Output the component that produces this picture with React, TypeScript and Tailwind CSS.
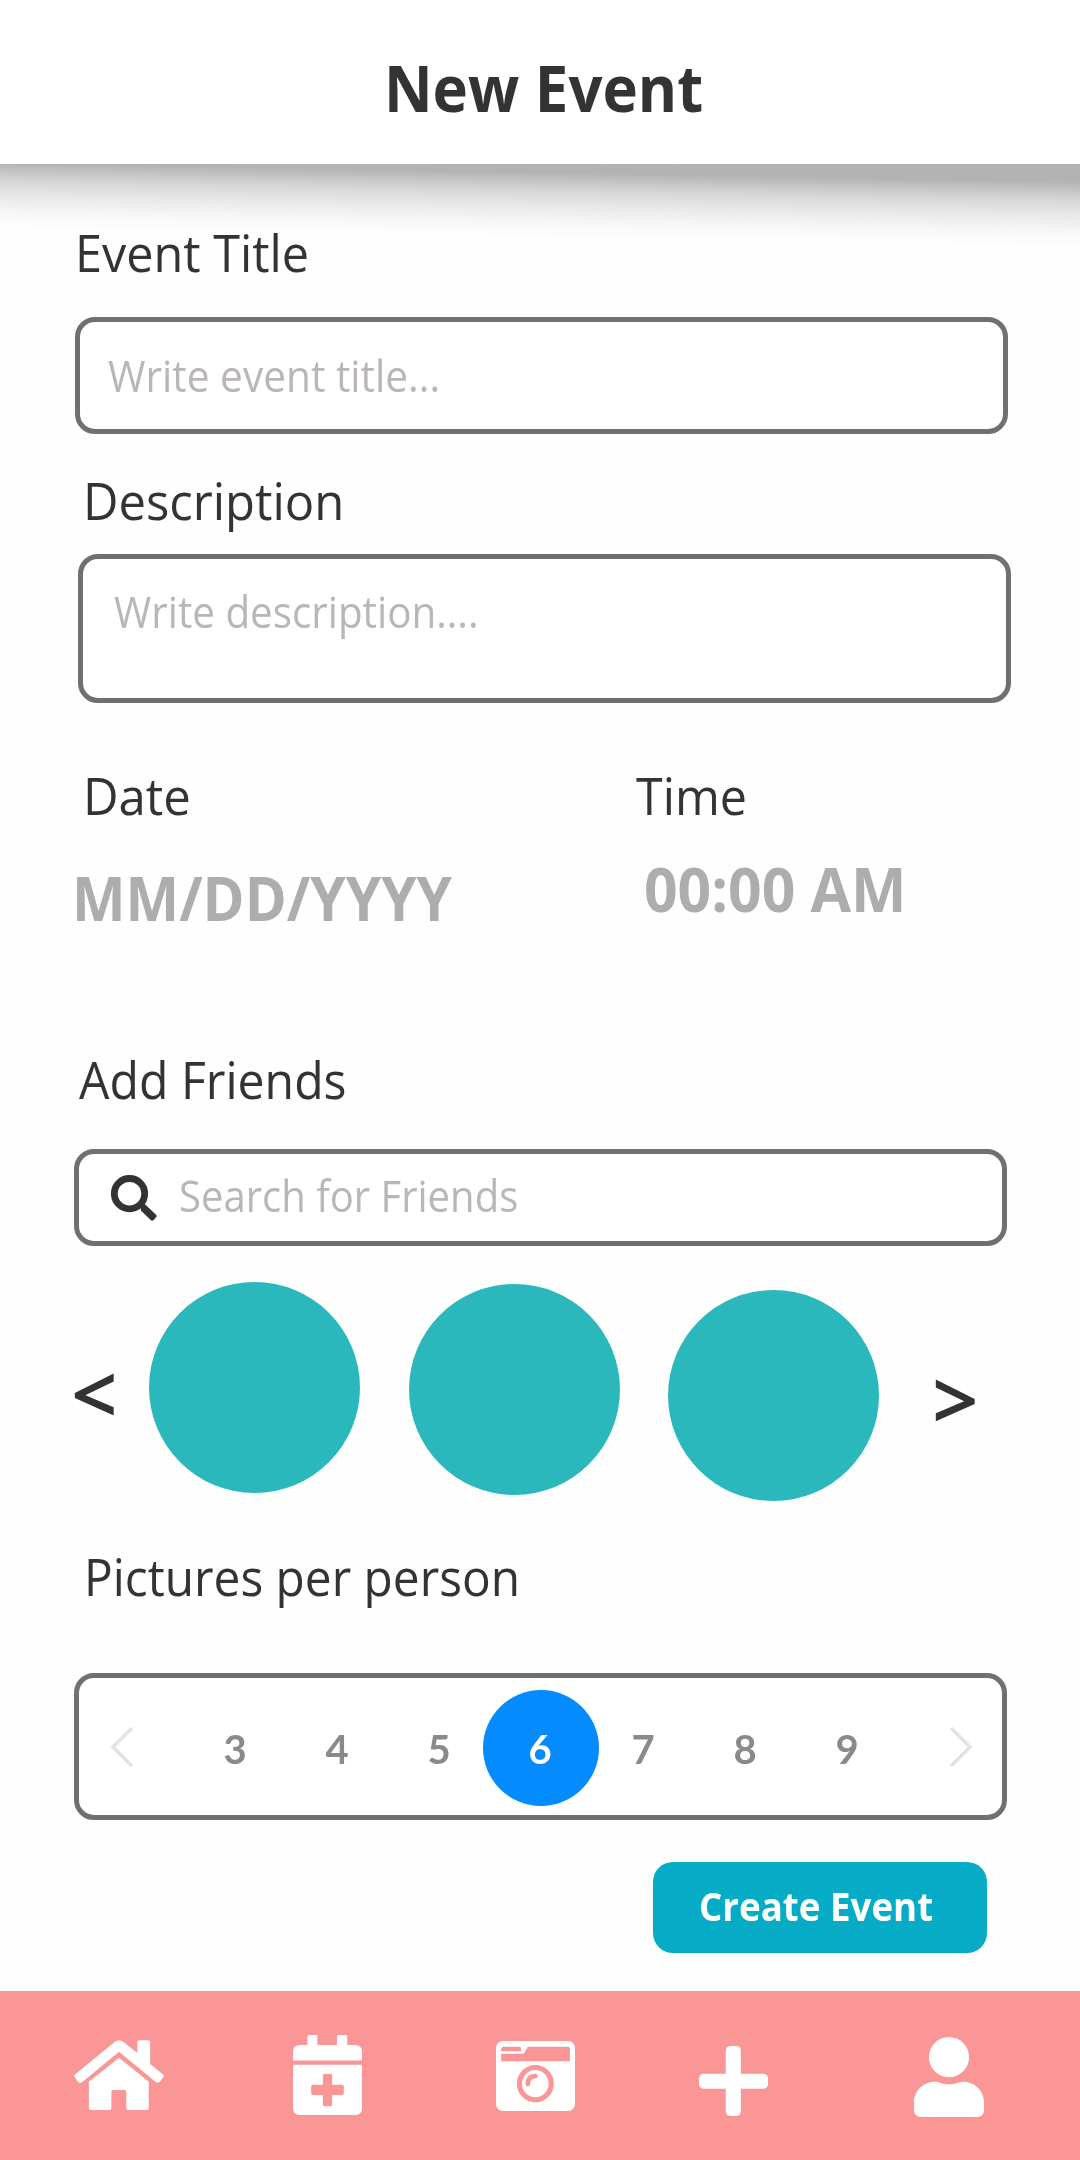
import React from "react";

const pickerValues = [3, 4, 5, 6, 7, 8, 9];
const selectedValue = 6;

function SectionLabel({ children, className }: { children: React.ReactNode; className: string }) {
  return (
    <h2 className={`w-max origin-left whitespace-nowrap text-[52px] leading-[53px] text-[#333333] ${className}`}>
      {children}
    </h2>
  );
}

function Placeholder({ children, className = "" }: { children: React.ReactNode; className?: string }) {
  return (
    <span className={`block w-max origin-left whitespace-nowrap text-[43px] leading-[43px] text-[#bbb6b6] ${className}`}>
      {children}
    </span>
  );
}

function SearchIcon() {
  return (
    <svg className="size-[46px] shrink-0" viewBox="183 432 138 138" fill="none">
      <circle cx="238.5" cy="488" r="45.5" stroke="#333" strokeWidth="20.5" />
      <path
        d="M285 520 L318 551 Q322 555 318 559 L311 567 Q306 571 302 567 L275 541 Q271 537 273 532 L270 520 Z"
        fill="#333"
      />
    </svg>
  );
}

function Chevron({ flip = false }: { flip?: boolean }) {
  return (
    <svg
      className={flip ? "h-[42px] w-[24px] -scale-x-100 blur-[0.6px]" : "h-[42px] w-[24px] blur-[0.6px]"}
      viewBox="0 0 24 42"
      fill="none"
      stroke="#e3e3e3"
      strokeWidth="3.6"
    >
      <path d="M22 2 L3 21 L22 40" />
    </svg>
  );
}

function HomeIcon() {
  return (
    <svg className="h-[70px] w-[90px]" viewBox="70 180 260 210" preserveAspectRatio="none" fill="#fff">
      <path d="M188 185 Q200 176 212 185 L253 219 V186 Q253 181 258 181 H285 Q290 181 290 186 V252 L328 284 Q331 288 328 292 L318 305 Q312 311 306 306 L200 215 L94 306 Q88 311 82 306 L72 292 Q69 288 72 284 Z" />
      <path d="M200 233 L286 305 V384 Q286 390 280 390 H227 Q221 390 221 384 V335 Q221 330 216 330 H183 Q178 330 178 335 V384 Q178 390 172 390 H119 Q113 390 113 384 V305 Z" />
    </svg>
  );
}

function CalendarPlusIcon() {
  return (
    <svg className="h-[80px] w-[69px]" viewBox="706 163 201 239" preserveAspectRatio="none" fill="#fff">
      <path d="M706 239 V214 Q706 193 727 193 H748 V167 Q748 163 752 163 H773 Q777 163 777 167 V193 H834 V167 Q834 163 838 163 H860 Q864 163 864 167 V193 H886 Q907 193 907 214 V235 Q907 239 903 239 Z" />
      <path
        fillRule="evenodd"
        d="M710 252 H903 Q907 252 907 256 V382 Q907 402 887 402 H726 Q706 402 706 382 V256 Q706 252 710 252 Z M798 279 Q793 279 793 284 V312 H764 Q759 312 759 317 V337 Q759 342 764 342 H793 V371 Q793 376 798 376 H815 Q820 376 820 371 V342 H849 Q854 342 854 337 V317 Q854 312 849 312 H820 V284 Q820 279 815 279 Z"
      />
    </svg>
  );
}

function CameraIcon() {
  return (
    <svg className="h-[70px] w-[79px]" viewBox="1295 183 231 210" preserveAspectRatio="none" fill="#fff">
      <rect x="1295" y="183" width="231" height="210" rx="20" />
      <g fill="#fa9696">
        <path d="M1388 200 H1506 Q1511 200 1511 205 V244 H1310 V221 H1373 Q1377 221 1379 217 Z" />
        <path d="M1317 200 H1364 Q1368 200 1368 204 V214 H1310 V207 Q1310 200 1317 200 Z" />
      </g>
      <g fill="none" stroke="#fa9696">
        <ellipse cx="1410" cy="311" rx="46.5" ry="48.5" strokeWidth="15" />
        <path d="M1388 312 Q1388 289 1410 288" strokeWidth="14" strokeLinecap="round" />
      </g>
    </svg>
  );
}

function PlusIcon() {
  return (
    <svg className="h-[70px] w-[69px]" viewBox="636 197 201 211" preserveAspectRatio="none" fill="#fff">
      <rect x="714" y="197" width="44" height="211" rx="14" />
      <rect x="636" y="281" width="201" height="45" rx="14" />
    </svg>
  );
}

function UserIcon() {
  return (
    <svg className="h-[80px] w-[70px]" viewBox="1260 172 202 239" preserveAspectRatio="none" fill="#fff">
      <ellipse cx="1361" cy="232" rx="58" ry="60" />
      <path d="M1260 367 C1260 334 1286 306 1320 306 C1333 306 1340 314 1361 314 C1382 314 1389 306 1402 306 C1436 306 1462 334 1462 367 V390 Q1462 411 1441 411 H1281 Q1260 411 1260 390 Z" />
    </svg>
  );
}

export default function App() {
  return (
    <div className="flex h-[2160px] w-[1080px] flex-col overflow-hidden bg-[#fefefe] font-['Open_Sans','Noto_Sans',sans-serif]">
      <header className="relative flex h-[164px] shrink-0 justify-center bg-white pt-[55px] pl-[7px]">
        <h1 className="origin-center scale-x-[0.936] text-[64px] leading-[65px] font-bold whitespace-nowrap text-[#333333]">
          New Event
        </h1>
        <div className="absolute inset-x-0 top-full h-[90px] bg-[linear-gradient(181deg,#b2b2b2_0px,#b3b3b3_18px,#c8c8c8_28px,#d9d9d9_38px,#e9e9e9_52px,#f9f9f9_70px,#fefefe_84px)]" />
      </header>

      <main className="relative flex flex-1 flex-col">
        <SectionLabel className="mt-[61px] ml-[75px] scale-x-[0.934]">Event Title</SectionLabel>
        <div className="mt-[39px] ml-[75px] flex h-[117px] w-[933px] items-center rounded-[20px] border-5 border-[#707070] bg-white pl-7">
          <Placeholder className="scale-x-[0.944]">Write event title...</Placeholder>
        </div>

        <SectionLabel className="mt-[39px] ml-[83px] scale-x-[0.941]">Description</SectionLabel>
        <div className="mt-7 ml-[78px] h-[149px] w-[933px] rounded-[20px] border-5 border-[#707070] bg-white pt-[31px] pl-[31px]">
          <Placeholder className="scale-x-[0.938]">Write description....</Placeholder>
        </div>

        <div className="mt-[65px] flex">
          <div className="w-[636px]">
            <SectionLabel className="ml-[83px] scale-x-[0.943]">Date</SectionLabel>
            <div className="mt-[47px] ml-[72px] w-max origin-left scale-x-[0.947] text-[60px] leading-[60px] font-bold text-[#adadad]">
              MM/DD/YYYY
            </div>
          </div>
          <div>
            <SectionLabel className="scale-x-[0.932]">Time</SectionLabel>
            <div className="mt-[38px] ml-2 w-max origin-left scale-x-[0.98] text-[60px] leading-[60px] font-bold text-[#adadad]">
              00:00 AM
            </div>
          </div>
        </div>

        <SectionLabel className="mt-[124px] ml-[79px] scale-x-[0.926]">Add Friends</SectionLabel>
        <div className="mt-[44px] ml-[74px] flex h-[97px] w-[933px] items-center gap-[22px] rounded-[20px] border-5 border-[#707070] bg-white pl-8">
          <SearchIcon />
          <Placeholder className="scale-x-[0.931] pb-1">Search for Friends</Placeholder>
        </div>

        <div className="mt-9 ml-[72px] flex items-start">
          <button className="mt-[72px] w-[77px] text-left text-[78px] leading-[78px] text-[#333333] [-webkit-text-stroke:2.2px_#333333]">
            &lt;
          </button>
          <div className="size-[211px] rounded-full bg-[#2bb8bd]" />
          <div className="mt-0.5 ml-[49px] size-[211px] rounded-full bg-[#2bb8bd]" />
          <div className="mt-2 ml-12 size-[211px] rounded-full bg-[#2bb8bd]" />
          <button className="mt-[78px] ml-[54px] text-[78px] leading-[78px] text-[#333333] [-webkit-text-stroke:2.2px_#333333]">
            &gt;
          </button>
        </div>

        <SectionLabel className="mt-12 ml-[84px] scale-x-[0.919]">Pictures per person</SectionLabel>
        <div className="mt-[71px] ml-[74px] flex h-[147px] w-[933px] items-center rounded-[20px] border-5 border-[#707070] bg-white pt-[3px]">
          <div className="w-[105px] pb-0.5 pl-[31px]">
            <Chevron />
          </div>
          {pickerValues.map((value) => (
            <div
              key={value}
              className={
                value === selectedValue
                  ? "-mx-[7px] flex size-[116px] items-center justify-center rounded-full bg-[#048bff] pr-0.5 text-white"
                  : "flex w-[102px] justify-center text-[#8a8a8a]"
              }
            >
              <span className="pt-0.5 font-['Lato','Open_Sans',sans-serif] text-[40px] leading-[40px] font-bold blur-[0.7px]">
                {value}
              </span>
            </div>
          ))}
          <div className="pb-0.5 pl-[51px]">
            <Chevron flip />
          </div>
        </div>

        <button className="mt-[42px] ml-[653px] h-[91px] w-[334px] rounded-[20px] bg-[#06abc6] pb-[5px] pl-[46px] text-left text-[40px] leading-[41px] font-bold text-white">
          <span className="block w-max origin-left scale-x-[0.917] whitespace-nowrap">Create Event</span>
        </button>
      </main>

      <nav className="flex h-[169px] shrink-0 items-start bg-[#fa9696] pl-[74px]">
        <div className="mt-[49px] mr-[129px]">
          <HomeIcon />
        </div>
        <div className="mt-[44px] mr-[134px]">
          <CalendarPlusIcon />
        </div>
        <div className="mt-[50px] mr-[124px]">
          <CameraIcon />
        </div>
        <div className="mt-[55px] mr-[146px]">
          <PlusIcon />
        </div>
        <div className="mt-[46px]">
          <UserIcon />
        </div>
      </nav>
    </div>
  );
}
